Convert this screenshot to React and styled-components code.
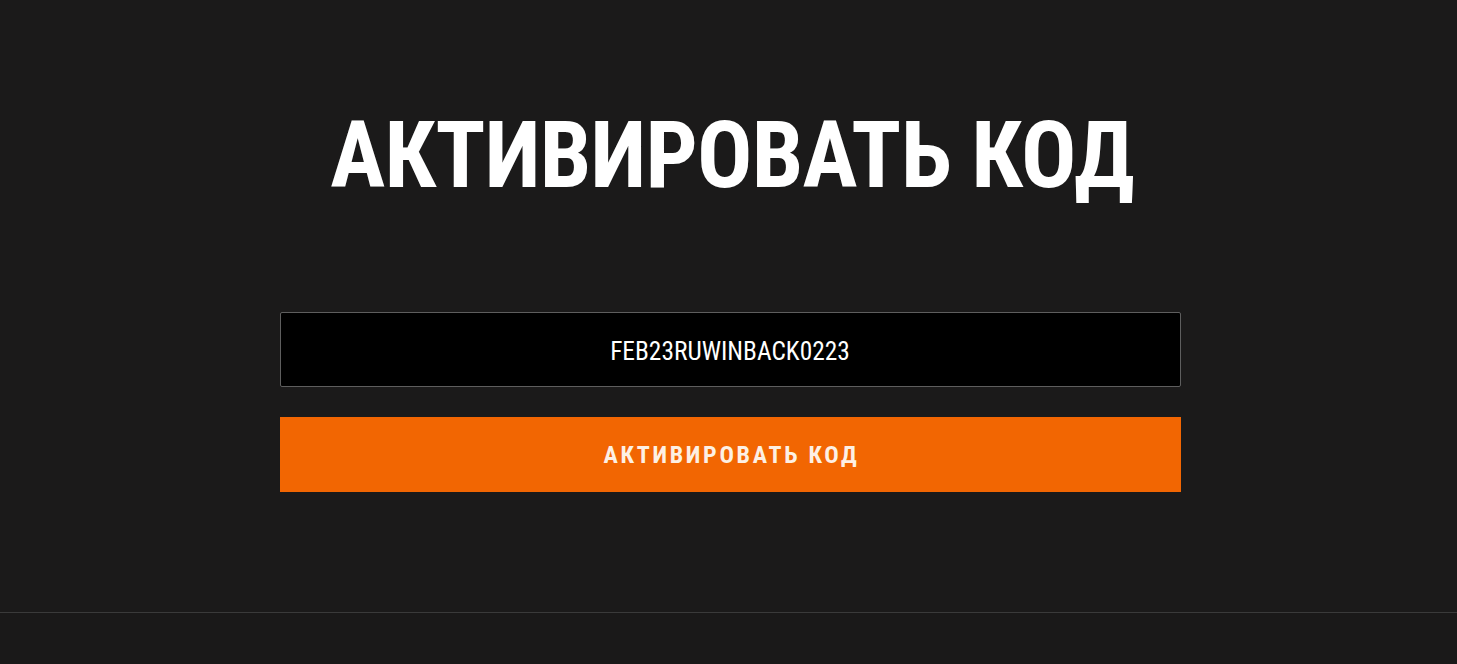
import React from 'react';
import styled, { createGlobalStyle } from 'styled-components';

const Global = createGlobalStyle`
  html, body { margin: 0; padding: 0; }
  body {
    background: #1b1a1a;
    color: #fff;
    font-family: "Roboto Condensed", Roboto, sans-serif;
  }
`;

const Page = styled.div`
  min-height: 664px;
  display: flex;
  flex-direction: column;
`;

const Main = styled.main`
  height: 612px;
  display: flex;
  flex-direction: column;
  align-items: center;
  padding-left: 3px;
  box-sizing: border-box;
`;

const Title = styled.h1`
  margin: 104px 0 0;
  padding-left: 4px;
  font-size: 92px;
  line-height: 104px;
  font-weight: 700;
  text-transform: uppercase;
  color: #fff;
  letter-spacing: -0.8px;
`;

const Form = styled.form`
  width: 901px;
  margin-top: 104px;
  display: flex;
  flex-direction: column;
  gap: 30px;
`;

const CodeInput = styled.input`
  height: 75px;
  box-sizing: border-box;
  background: #000;
  border: 1px solid #5e5e5e;
  border-radius: 2px;
  color: #fff;
  font-family: "Roboto Condensed", Roboto, sans-serif;
  font-size: 25.4px;
  text-align: center;
  outline: none;
  padding: 2px 16px 0;
`;

const Submit = styled.button`
  height: 75px;
  border: none;
  border-radius: 0;
  background: #f26602;
  color: #fdf0e4;
  font-family: "Roboto Condensed", Roboto, sans-serif;
  font-weight: 700;
  font-size: 24px;
  letter-spacing: 2.7px;
  text-transform: uppercase;
  padding: 0 0 0 3px;
  cursor: pointer;
`;

const Footer = styled.footer`
  flex: 1;
  border-top: 1px solid #3a3a3a;
  background: #1a1919;
`;

export default function App() {
  return (
    <>
      <Global />
      <Page>
        <Main>
          <Title>Активировать код</Title>
          <Form onSubmit={(e) => e.preventDefault()}>
            <CodeInput defaultValue="FEB23RUWINBACK0223" />
            <Submit type="submit">Активировать код</Submit>
          </Form>
        </Main>
        <Footer />
      </Page>
    </>
  );
}
